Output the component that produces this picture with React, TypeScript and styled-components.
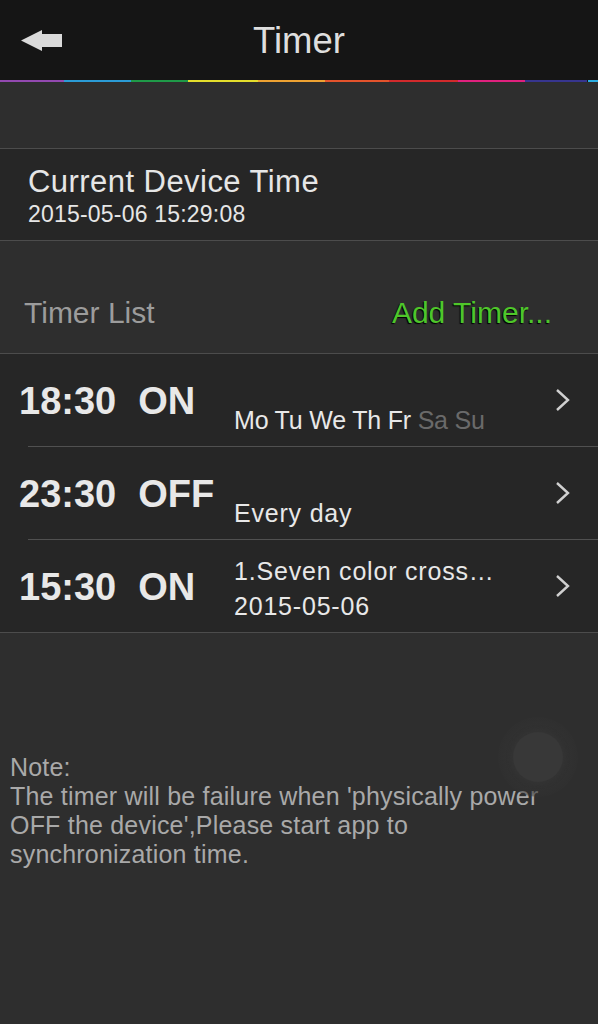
import React from "react";
import styled, { createGlobalStyle } from "styled-components";

const Global = createGlobalStyle`
  html, body { margin: 0; padding: 0; background: #2e2e2e; }
  body { font-family: "Liberation Sans", Arial, sans-serif; -webkit-font-smoothing: antialiased; }
  #root { min-height: 1024px; background: #2e2e2e; }
`;

const Page = styled.div`
  position: relative;
  width: 598px;
  min-height: 1024px;
  background: #2e2e2e;
  overflow: hidden;
`;

const Header = styled.header`
  height: 80px;
  background: #151515;
  display: grid;
  grid-template-columns: 1fr auto 1fr;
  align-items: center;
`;

const BackButton = styled.div`
  padding-left: 21px;
  display: flex;
  align-items: center;
  height: 100%;
  padding-top: 1px;
`;

const Title = styled.h1`
  margin: 0;
  font-weight: 400;
  font-size: 36.5px;
  color: #dedede;
  line-height: 1;
  padding-top: 3px;
`;

const ColorBar = styled.div`
  display: flex;
  height: 2px;
`;

const Segment = styled.div<{ $w: number; $c: string }>`
  width: ${(p) => p.$w}px;
  background: ${(p) => p.$c};
  flex: none;
`;

const Spacer = styled.div<{ $h: number }>`
  height: ${(p) => p.$h}px;
`;

const DeviceSection = styled.section`
  border-top: 1px solid #4c4c4c;
  border-bottom: 1px solid #4c4c4c;
  background: #262626;
  height: 91px;
  padding-left: 28px;
  display: flex;
  flex-direction: column;
  justify-content: center;
`;

const DeviceTitle = styled.div`
  font-size: 31px;
  letter-spacing: 0.45px;
  color: #e6e6e6;
  line-height: 34px;
  padding-top: 2px;
`;

const DeviceTime = styled.div`
  font-size: 23px;
  letter-spacing: 0.2px;
  color: #e6e6e6;
  line-height: 26px;
  margin-top: 2px;
`;

const ListHeader = styled.div`
  height: 112px;
  display: flex;
  align-items: flex-end;
  justify-content: space-between;
  padding: 0 46px 23px 24px;
  box-sizing: border-box;
`;

const ListLabel = styled.div`
  font-size: 30px;
  color: #9c9c9c;
  line-height: 34px;
`;

const AddLink = styled.div`
  font-size: 30px;
  color: #4fc62a;
  line-height: 34px;
  text-shadow: -1px 1px 1px #000;
`;

const List = styled.div`
  border-top: 1px solid #4c4c4c;
  border-bottom: 1px solid #4c4c4c;
  background: #262626;
`;

const Divider = styled.div`
  height: 1px;
  margin-left: 28px;
  background: #505050;
`;

const Row = styled.div`
  height: 92px;
  display: flex;
  align-items: center;
`;

const TimeBlock = styled.div`
  width: 215px;
  padding-left: 19px;
  flex: none;
  display: flex;
  gap: 22px;
  font-weight: 700;
  font-size: 38px;
  color: #e8e8e8;
  line-height: 1;
  padding-top: 2px;
`;

const Details = styled.div`
  flex: 1;
  display: flex;
  flex-direction: column;
  padding-top: 6px;
`;

const DetailLine = styled.div<{ $tight?: boolean }>`
  font-size: 25px;
  letter-spacing: ${(p) => (p.$tight ? "-0.2px" : "0.8px")};
  line-height: 35px;
  height: 35px;
  color: #e8e8e8;
  white-space: nowrap;
`;

const Off = styled.span`
  color: #6a6a6a;
`;

const Chevron = styled.div`
  width: 40px;
  margin-right: 27px;
  display: flex;
  justify-content: flex-end;
  align-items: center;
`;

const Note = styled.div`
  margin-top: 120px;
  padding-left: 10px;
  font-size: 25px;
  letter-spacing: 0.2px;
  line-height: 29px;
  color: #a9a9a9;
`;

const FloatingButton = styled.div`
  position: absolute;
  left: 498px;
  top: 717px;
  width: 80px;
  height: 80px;
  border-radius: 50%;
  background: radial-gradient(
    circle,
    rgba(52, 52, 52, 0.9) 0%,
    rgba(50, 50, 50, 0.7) 55%,
    rgba(48, 48, 48, 0.35) 75%,
    rgba(46, 46, 46, 0) 100%
  );
  display: flex;
  align-items: center;
  justify-content: center;
`;

const FloatingInner = styled.div`
  width: 50px;
  height: 50px;
  border-radius: 50%;
  background: #383838;
  box-shadow: 0 0 4px 2px #343434;
`;

const segments: [number, string][] = [
  [64, "#9349b0"],
  [67, "#2b9bd6"],
  [57, "#1f9a48"],
  [70, "#e4de2c"],
  [67, "#eea232"],
  [64, "#e4532c"],
  [69, "#d22a2c"],
  [67, "#e0217e"],
  [62, "#37358f"],
  [1, "#151515"],
  [10, "#2aade2"],
];

const ChevronIcon = () => (
  <svg width="16" height="24" viewBox="0 0 16 24">
    <polyline points="2,2 13,12 2,22" fill="none" stroke="#d0d0d0" strokeWidth="2.4" />
  </svg>
);

const BackArrow = () => (
  <svg width="42" height="22" viewBox="0 0 42 22">
    <polygon points="0,10.5 21,0 21,4 41,4 41,17 21,17 21,21" fill="#dadada" />
  </svg>
);

type Timer = {
  time: string;
  state: string;
  line1: React.ReactNode;
  line2: React.ReactNode;
  tight?: boolean;
};

const timers: Timer[] = [
  {
    time: "18:30",
    state: "ON",
    line1: "",
    line2: (
      <>
        Mo Tu We Th Fr <Off>Sa Su</Off>
      </>
    ),
    tight: true,
  },
  { time: "23:30", state: "OFF", line1: "", line2: "Every day" },
  { time: "15:30", state: "ON", line1: "1.Seven color cross…", line2: "2015-05-06" },
];

export default function App() {
  return (
    <Page>
      <Global />
      <Header>
        <BackButton>
          <BackArrow />
        </BackButton>
        <Title>Timer</Title>
        <div />
      </Header>
      <ColorBar>
        {segments.map(([w, c], i) => (
          <Segment key={i} $w={w} $c={c} />
        ))}
      </ColorBar>
      <Spacer $h={66} />
      <DeviceSection>
        <DeviceTitle>Current Device Time</DeviceTitle>
        <DeviceTime>2015-05-06 15:29:08</DeviceTime>
      </DeviceSection>
      <ListHeader>
        <ListLabel>Timer List</ListLabel>
        <AddLink>Add Timer...</AddLink>
      </ListHeader>
      <List>
        {timers.map((t, i) => (
          <React.Fragment key={i}>
            {i > 0 && <Divider />}
            <Row>
              <TimeBlock>
                <span>{t.time}</span>
                <span>{t.state}</span>
              </TimeBlock>
              <Details>
                <DetailLine>{t.line1}</DetailLine>
                <DetailLine $tight={t.tight}>{t.line2}</DetailLine>
              </Details>
              <Chevron>
                <ChevronIcon />
              </Chevron>
            </Row>
          </React.Fragment>
        ))}
      </List>
      <Note>
        Note:
        <br />
        The timer will be failure when 'physically power
        <br />
        OFF the device',Please start app to
        <br />
        synchronization time.
      </Note>
      <FloatingButton>
        <FloatingInner />
      </FloatingButton>
    </Page>
  );
}
